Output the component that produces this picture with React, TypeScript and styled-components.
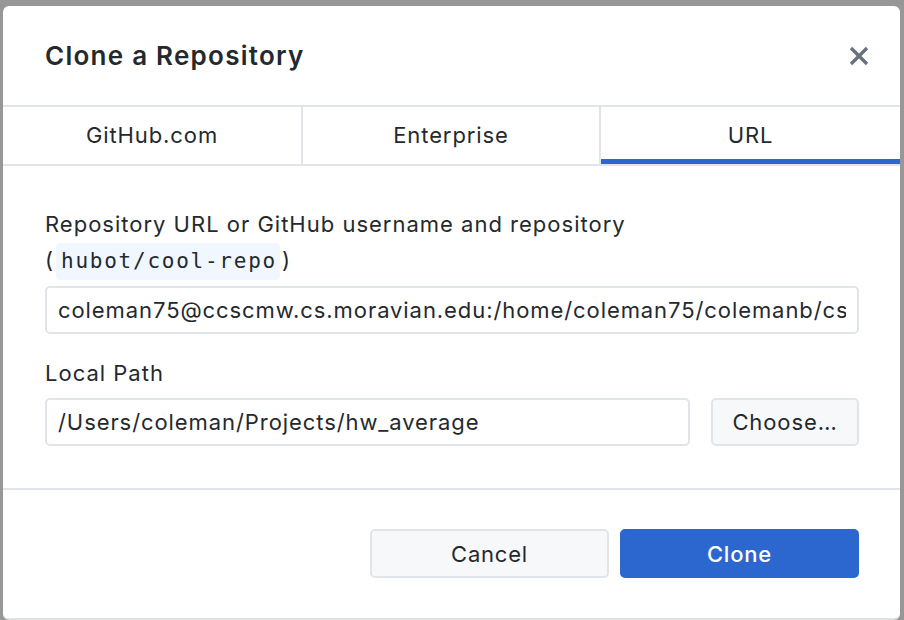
import React from "react";
import styled, { createGlobalStyle } from "styled-components";

const Global = createGlobalStyle`
  html, body { margin: 0; padding: 0; background: #979797; }
  body { font-family: Inter, "Noto Sans", sans-serif; color: #24292e; }
  * { box-sizing: border-box; }
`;

const Page = styled.div`
  width: 904px;
  height: 620px;
  padding: 6px 4px 0 3px;
  overflow: hidden;
`;

const Dialog = styled.div`
  width: 897px;
  height: 614px;
  background: #fff;
  border-radius: 6px;
  border-bottom: 2px solid #dfe1e4;
  display: flex;
  flex-direction: column;
  overflow: hidden;
`;

const Header = styled.header`
  height: 101px;
  flex: none;
  display: flex;
  align-items: center;
  justify-content: space-between;
  padding: 0 31px 0 42px;
  border-bottom: 2px solid #e1e4e8;
`;

const Title = styled.h1`
  margin: 0;
  font-size: 26px;
  font-weight: 600;
  letter-spacing: 1.25px;
  color: #24292e;
`;

const CloseButton = styled.button`
  width: 20px;
  height: 20px;
  padding: 0;
  border: none;
  background: none;
  display: flex;
  align-items: center;
  justify-content: center;
`;

const Tabs = styled.nav`
  display: grid;
  grid-template-columns: 300px 298px 1fr;
  height: 59px;
  flex: none;
  border-bottom: 2px solid #e1e4e8;
`;

const Tab = styled.div<{ $active?: boolean; $last?: boolean }>`
  display: flex;
  align-items: center;
  justify-content: center;
  font-size: 22px;
  letter-spacing: 0.9px;
  color: #24292e;
  border-right: ${(p) => (p.$last ? "none" : "2px solid #e1e4e8")};
  box-shadow: ${(p) => (p.$active ? "inset 0 -5px 0 #2c67d0" : "none")};
  padding-bottom: 2px;
`;

const Body = styled.section`
  padding: 40px 41px 42px 42px;
  border-bottom: 2px solid #e1e4e8;
  display: flex;
  flex-direction: column;
`;

const Label = styled.label`
  font-size: 22px;
  letter-spacing: 1px;
  line-height: 36px;
  color: #24292e;
`;

const Code = styled.code`
  font-family: "DejaVu Sans Mono", "Liberation Mono", monospace;
  font-size: 21px;
  letter-spacing: 1.75px;
  background: #f1f7fe;
  border-radius: 4px;
  padding: 6px 3px 7px 5px;
  margin: 0 2px 0 2px;
`;

const Field = styled.input`
  display: block;
  width: 100%;
  height: 48px;
  margin-top: 7px;
  padding: 0 11px;
  font-family: Inter, "Noto Sans", sans-serif;
  font-size: 22px;
  letter-spacing: 0.92px;
  color: #24292e;
  background: #fff;
  border: 2px solid #e1e4e8;
  border-radius: 5px;
  outline: none;
`;

const PathLabel = styled(Label)`
  margin-top: 21px;
`;

const PathRow = styled.div`
  display: flex;
  gap: 21px;
  margin-top: 7px;
  & > input { margin-top: 0; flex: 1; }
`;

const Button = styled.button<{ $primary?: boolean }>`
  height: 49px;
  font-family: Inter, "Noto Sans", sans-serif;
  font-size: 22px;
  letter-spacing: 0.8px;
  font-weight: ${(p) => (p.$primary ? 500 : 400)};
  color: ${(p) => (p.$primary ? "#fff" : "#24292e")};
  background: ${(p) => (p.$primary ? "#2c67d0" : "#f7f8fa")};
  border: 2px solid ${(p) => (p.$primary ? "#2c67d0" : "#e1e4e8")};
  border-radius: 5px;
  padding: 0;
`;

const ChooseButton = styled(Button)`
  width: 148px;
  height: 48px;
  letter-spacing: 0.9px;
`;

const Footer = styled.footer`
  flex: 1;
  display: flex;
  justify-content: flex-end;
  align-items: flex-start;
  gap: 11px;
  padding: 39px 41px 0 0;
  & > button { width: 239px; }
`;

export default function App() {
  return (
    <>
      <Global />
      <Page>
        <Dialog>
          <Header>
            <Title>Clone a Repository</Title>
            <CloseButton aria-label="Close">
              <svg width="20" height="20" viewBox="0 0 20 20">
                <path d="M2 2 L18 18 M18 2 L2 18" stroke="#6a737d" strokeWidth="3.4" strokeLinecap="butt" />
              </svg>
            </CloseButton>
          </Header>
          <Tabs>
            <Tab>GitHub.com</Tab>
            <Tab>Enterprise</Tab>
            <Tab $active $last>URL</Tab>
          </Tabs>
          <Body>
            <Label>
              Repository URL or GitHub username and repository
              <br />(<Code>hubot/cool-repo</Code>)
            </Label>
            <Field readOnly value="coleman75@ccscmw.cs.moravian.edu:/home/coleman75/colemanb/cs" />
            <PathLabel>Local Path</PathLabel>
            <PathRow>
              <Field readOnly value="/Users/coleman/Projects/hw_average" />
              <ChooseButton>Choose…</ChooseButton>
            </PathRow>
          </Body>
          <Footer>
            <Button>Cancel</Button>
            <Button $primary>Clone</Button>
          </Footer>
        </Dialog>
      </Page>
    </>
  );
}
